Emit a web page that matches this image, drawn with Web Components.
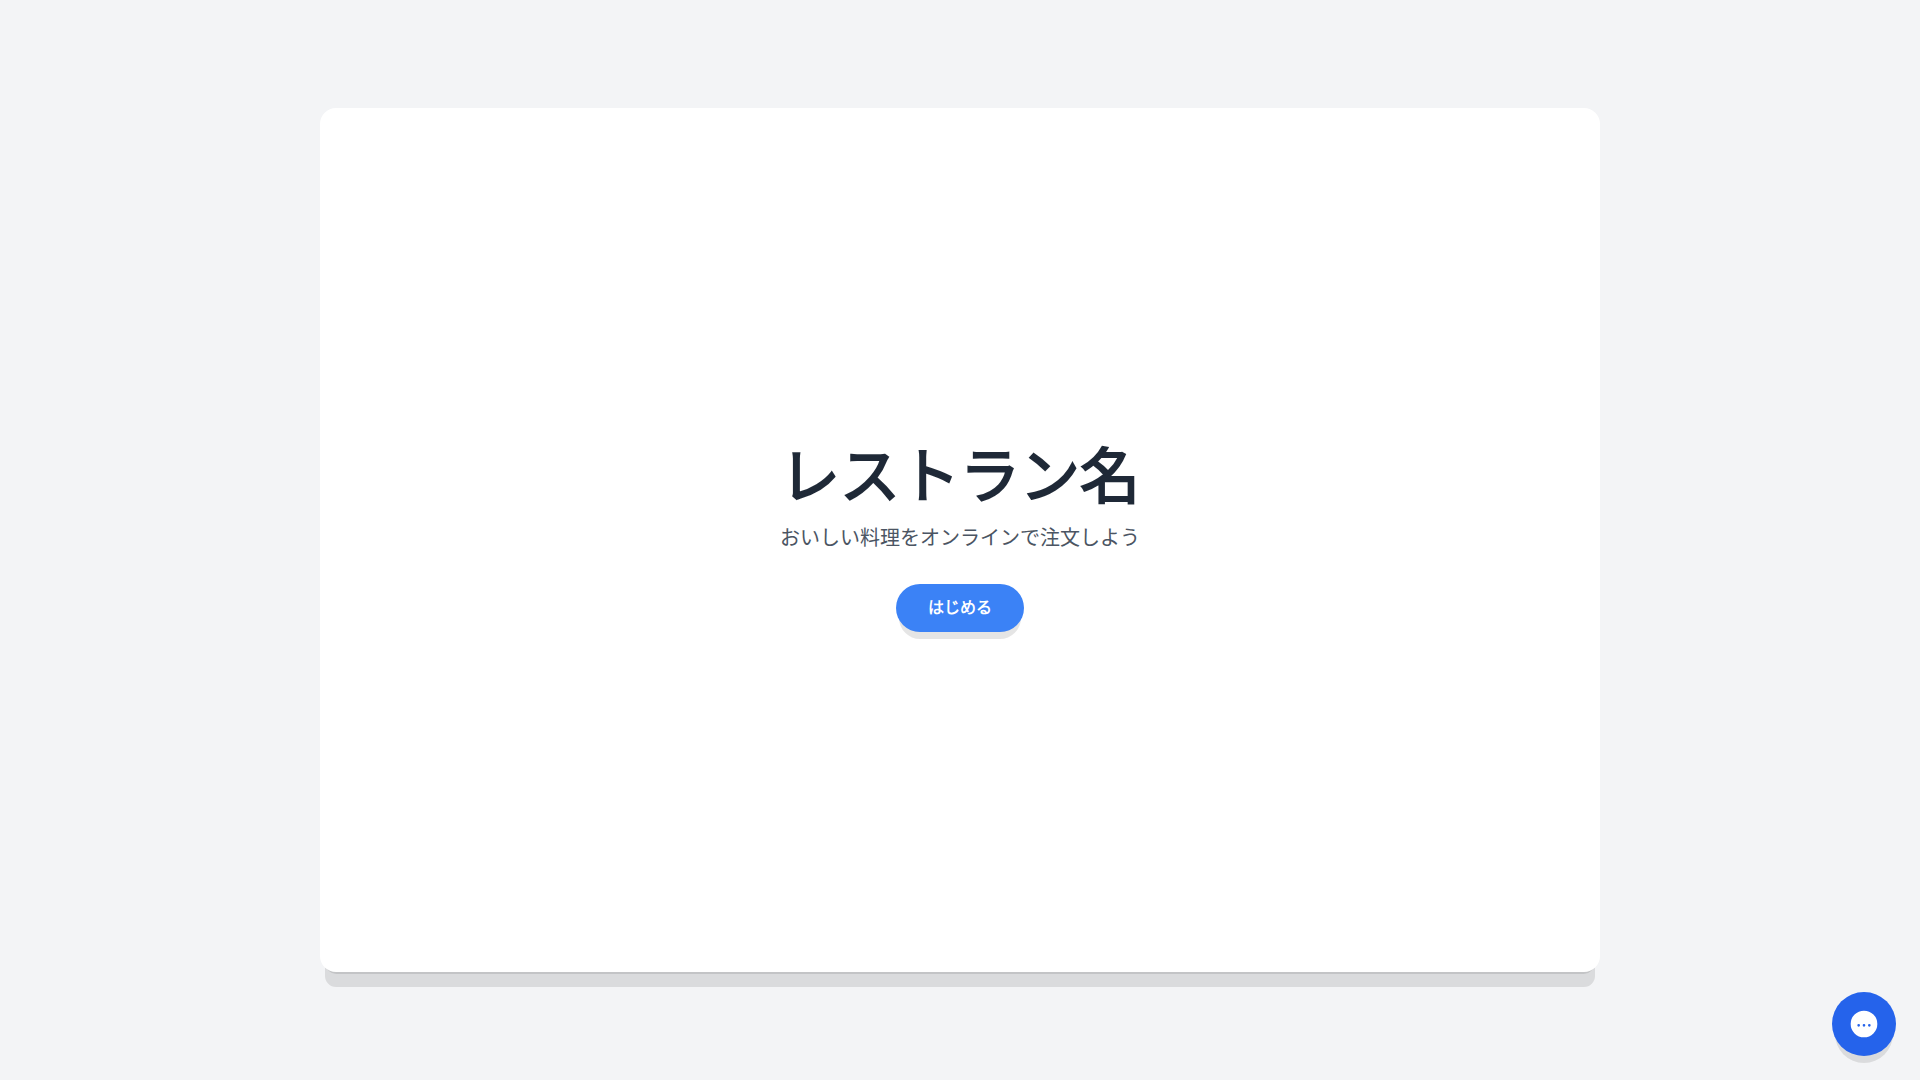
<!DOCTYPE html>
<html lang="ja">
<head>
<meta charset="utf-8">
<meta name="viewport" content="width=device-width, initial-scale=1">
<title>レストラン名</title>
<style>
  body { margin: 0; background: #f3f4f6; font-family: "Liberation Sans", "Noto Sans CJK JP", sans-serif; }
</style>
</head>
<body>
<restaurant-app>
  <welcome-hero>
    <span slot="title">レストラン名</span>
    <span slot="subtitle">おいしい料理をオンラインで注文しよう</span>
    <pill-button slot="action">はじめる</pill-button>
  </welcome-hero>
  <chat-launcher slot="floating"></chat-launcher>
</restaurant-app>
<script>
  const define = (name, html) => customElements.define(name, class extends HTMLElement {
    constructor() {
      super();
      this.attachShadow({ mode: "open" }).innerHTML = html;
    }
  });

  define("restaurant-app", `
    <style>
      :host { display: flex; align-items: center; justify-content: center; min-height: 100vh; }
      main { display: flex; width: 100%; max-width: 1280px; min-height: 80vh; border-radius: 16px; background: #fff;
        box-shadow: 0 20px 0 -5px rgb(0 0 0 / 0.1), 0 8px 0 -6px rgb(0 0 0 / 0.1); }
      ::slotted(welcome-hero) { flex: 1; }
    </style>
    <main><slot></slot></main>
    <slot name="floating"></slot>`);

  define("welcome-hero", `
    <style>
      :host { display: flex; flex-direction: column; align-items: center; justify-content: center; text-align: center; }
      h1 { margin: 0 0 16px; font-size: 60px; line-height: 60px; font-weight: 400; color: #1f2937; -webkit-text-stroke: 2px #1f2937; }
      p { margin: 0 0 32px; font-size: 20px; line-height: 28px; color: #4b5563; }
    </style>
    <h1><slot name="title"></slot></h1>
    <p><slot name="subtitle"></slot></p>
    <slot name="action"></slot>`);

  define("pill-button", `
    <style>
      :host { display: block; }
      button { display: block; padding: 12px 32px; border: 0; border-radius: 24px; background: #3b82f6; color: #fff;
        font-family: "Liberation Sans", "Noto Sans CJK JP DemiLight", "Noto Sans CJK JP", sans-serif;
        font-size: 16px; line-height: 24px; font-weight: 700; cursor: pointer;
        box-shadow: 0 10px 0 -3px rgb(0 0 0 / 0.1), 0 4px 0 -4px rgb(0 0 0 / 0.1); }
      button:hover { background: #2563eb; }
    </style>
    <button type="button"><slot></slot></button>`);

  define("chat-launcher", `
    <style>
      :host { position: fixed; right: 24px; bottom: 24px; }
      button { display: flex; padding: 16px; border: 0; border-radius: 50%; background: #2563eb; color: #fff; cursor: pointer;
        box-shadow: 0 10px 0 -3px rgb(0 0 0 / 0.1), 0 4px 0 -4px rgb(0 0 0 / 0.1); }
      svg { display: block; width: 32px; height: 32px; }
    </style>
    <button type="button" aria-label="チャットを開く">
      <svg viewBox="0 0 24 24" fill="currentColor" aria-hidden="true">
        <path fill-rule="evenodd" d="M12 2a10 10 0 1 0 0 20 10 10 0 0 0 0-20ZM8 12a1 1 0 1 1 0 2 1 1 0 0 1 0-2Zm4 0a1 1 0 1 1 0 2 1 1 0 0 1 0-2Zm4 0a1 1 0 1 1 0 2 1 1 0 0 1 0-2Z"/>
      </svg>
    </button>`);
</script>
</body>
</html>
